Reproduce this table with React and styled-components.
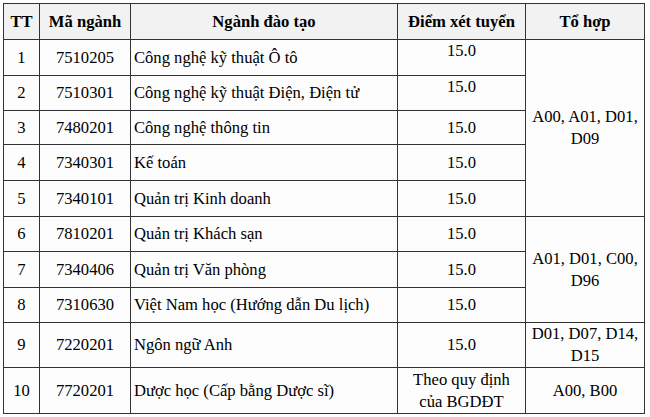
import React from 'react';
import styled, { createGlobalStyle } from 'styled-components';

const GlobalStyle = createGlobalStyle`
  html, body {
    margin: 0;
    padding: 0;
    background: #fff;
  }
  body {
    font-family: "Liberation Serif", "Times New Roman", serif;
    color: #000;
  }
`;

const Page = styled.div`
  padding: 3px 0 0 3px;
`;

const Table = styled.table`
  width: 641px;
  border-collapse: collapse;
  table-layout: fixed;
  font-family: "Liberation Serif", "Times New Roman", serif;
  font-size: 16.6px;
  line-height: 21.6px;
  color: #000;
  border: 1px solid #444;
`;

const HeadCell = styled.th`
  background: #f2f2f2;
  border: 1px solid #333;
  font-weight: bold;
  text-align: center;
  padding: 0 4px;
  height: 35px;
`;

const Cell = styled.td`
  border: 1px solid #333;
  background: #fdfdfd;
  text-align: ${(p) => (p.$left ? 'left' : 'center')};
  vertical-align: ${(p) => (p.$top ? 'top' : 'middle')};
  padding: ${(p) => (p.$left ? '0 3px' : '0 5px')};
`;

const Row = styled.tr`
  height: ${(p) => p.$h}px;
`;

const rows = [
  { tt: 1, code: '7510205', name: 'Công nghệ kỹ thuật Ô tô', score: '15.0', top: true, h: 36 },
  { tt: 2, code: '7510301', name: 'Công nghệ kỹ thuật Điện, Điện tử', score: '15.0', top: true, h: 35 },
  { tt: 3, code: '7480201', name: 'Công nghệ thông tin', score: '15.0', h: 34 },
  { tt: 4, code: '7340301', name: 'Kế toán', score: '15.0', h: 36 },
  { tt: 5, code: '7340101', name: 'Quản trị Kinh doanh', score: '15.0', h: 36 },
  { tt: 6, code: '7810201', name: 'Quản trị Khách sạn', score: '15.0', h: 35 },
  { tt: 7, code: '7340406', name: 'Quản trị Văn phòng', score: '15.0', h: 36 },
  { tt: 8, code: '7310630', name: 'Việt Nam học (Hướng dẫn Du lịch)', score: '15.0', h: 35 },
  { tt: 9, code: '7220201', name: 'Ngôn ngữ Anh', score: '15.0', h: 45 },
  { tt: 10, code: '7720201', name: 'Dược học (Cấp bằng Dược sĩ)', score: 'Theo quy định của BGDĐT', h: 46 },
];

// tổ hợp cells, keyed by the row they start on
const groups = {
  1: { text: 'A00, A01, D01, D09', span: 5 },
  6: { text: 'A01, D01, C00, D96', span: 3 },
  9: { text: 'D01, D07, D14, D15', span: 1 },
  10: { text: 'A00, B00', span: 1 },
};

export default function App() {
  return (
    <Page>
      <GlobalStyle />
      <Table>
        <colgroup>
          <col style={{ width: 36 }} />
          <col style={{ width: 91 }} />
          <col style={{ width: 267 }} />
          <col style={{ width: 128 }} />
          <col style={{ width: 119 }} />
        </colgroup>
        <thead>
          <tr>
            <HeadCell>TT</HeadCell>
            <HeadCell>Mã ngành</HeadCell>
            <HeadCell>Ngành đào tạo</HeadCell>
            <HeadCell>Điểm xét tuyển</HeadCell>
            <HeadCell>Tổ hợp</HeadCell>
          </tr>
        </thead>
        <tbody>
          {rows.map((r) => (
            <Row key={r.tt} $h={r.h}>
              <Cell>{r.tt}</Cell>
              <Cell>{r.code}</Cell>
              <Cell $left>{r.name}</Cell>
              <Cell $top={r.top}>{r.score}</Cell>
              {groups[r.tt] && (
                <Cell rowSpan={groups[r.tt].span}>{groups[r.tt].text}</Cell>
              )}
            </Row>
          ))}
        </tbody>
      </Table>
    </Page>
  );
}
